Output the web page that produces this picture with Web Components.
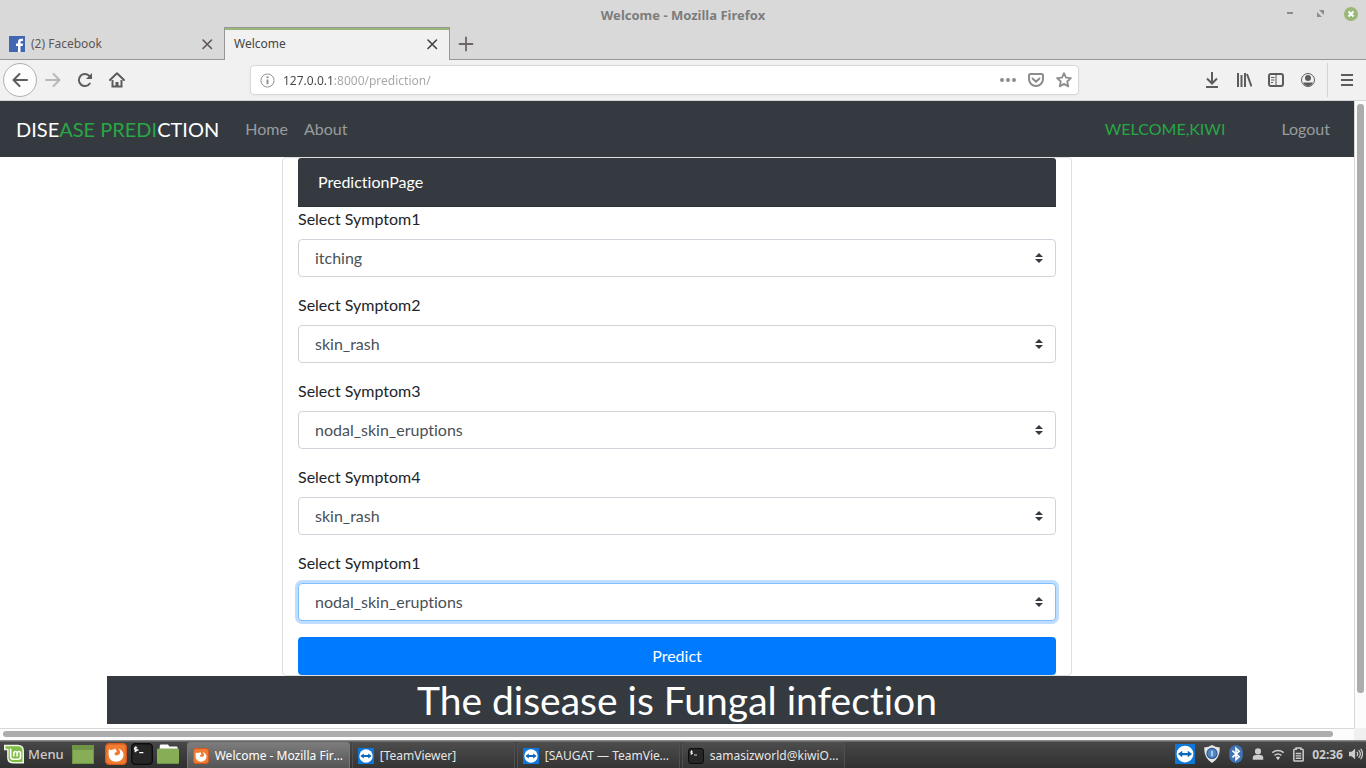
<!DOCTYPE html>
<html lang="en">
<head>
<meta charset="utf-8">
<title>Welcome - Mozilla Firefox</title>
<style>
html,body{margin:0;height:100%}
body{font-family:"Noto Sans",sans-serif;background:#fff}
</style>
</head>
<body>
<desktop-screen>
  <browser-window heading="Welcome - Mozilla Firefox">
    <browser-tab slot="tabs" label="(2) Facebook" icon="facebook"></browser-tab>
    <browser-tab slot="tabs" label="Welcome" active></browser-tab>
    <site-page>
      <site-nav></site-nav>
      <prediction-card>
        <symptom-select label="Select Symptom1" value="itching" name="symptom1"></symptom-select>
        <symptom-select label="Select Symptom2" value="skin_rash" name="symptom2"></symptom-select>
        <symptom-select label="Select Symptom3" value="nodal_skin_eruptions" name="symptom3"></symptom-select>
        <symptom-select label="Select Symptom4" value="skin_rash" name="symptom4"></symptom-select>
        <symptom-select label="Select Symptom1" value="nodal_skin_eruptions" name="symptom5" highlighted></symptom-select>
      </prediction-card>
      <result-banner>The disease is Fungal infection</result-banner>
    </site-page>
  </browser-window>
  <task-bar slot="panel">
    <task-item icon="firefox" active>Welcome - Mozilla Firefox</task-item>
    <task-item icon="teamviewer">[TeamViewer]</task-item>
    <task-item icon="teamviewer">[SAUGAT — TeamViewer]</task-item>
    <task-item icon="terminal">samasizworld@kiwiOS: ~</task-item>
  </task-bar>
</desktop-screen>

<script>
const svg = (size, body, box = 16) =>
  `<svg width="${size}" height="${size}" viewBox="0 0 ${box} ${box}" fill="none" stroke="currentColor" stroke-width="2" aria-hidden="true">${body}</svg>`;

const icons = {
  close: '<path d="M4 4l8.500 8.500M12.500 4L4 12.500" stroke-width="1.600" stroke-linecap="round"/>',
  plus: '<path d="M8 1.500v13M1.500 8h13" stroke-width="1.800" stroke-linecap="round"/>',
  back: '<path d="M15 8H2M7.500 2L1.500 8l6 6" stroke-linecap="round" stroke-linejoin="round"/>',
  forward: '<path d="M1 8h13M8.500 2l6 6-6 6" stroke-linecap="round" stroke-linejoin="round"/>',
  reload: '<path d="M12.800 11.500A6 6 0 1 1 12.500 4.200" stroke-linecap="round"/><path d="M15 1v6H9z" fill="currentColor" stroke="none"/>',
  home: '<path d="M1 8l7-6.700L15 8" stroke-linecap="round" stroke-linejoin="round"/><path d="M3.500 8v6.500h9V8"/><path d="M8 15v-5" stroke-width="3"/>',
  info: '<circle cx="8" cy="8" r="7" stroke-width="1"/><path d="M8 7v5" stroke-width="2"/><circle cx="8" cy="4.600" r="1.200" fill="currentColor" stroke="none"/>',
  dots: '<g fill="currentColor" stroke="none"><circle cx="2" cy="8" r="2"/><circle cx="8" cy="8" r="2"/><circle cx="14" cy="8" r="2"/></g>',
  pocket: '<path d="M2.500 2h11q1.500 0 1.500 1.500V7A7 7 0 0 1 1 7V3.500Q1 2 2.500 2z"/><path d="M4.500 6.500L8 9.700l3.500-3.200" stroke-linecap="round" stroke-linejoin="round"/>',
  star: '<path d="M8 1.200l2 4.500 4.900.5-3.700 3.300 1.100 4.900L8 11.900l-4.300 2.500 1.100-4.900L1.100 6.200l4.900-.5z" stroke-width="1.800" stroke-linejoin="round"/>',
  download: '<path d="M8 0v11M3 6.500l5 5 5-5M2 15h12"/>',
  library: '<path d="M2 1v14M5.500 3v12M9 1v14M11 2l4.500 12.500"/>',
  sidebar: '<rect x="1" y="2" width="14" height="12" rx="2"/><path d="M8 2v12M3 5.500h3.500M3 8h3.500M3 10.500h2" stroke-width="1"/>',
  account: '<circle cx="8" cy="8" r="6.500" stroke-width="1"/><circle cx="8" cy="6" r="3" fill="currentColor" stroke="none"/><path d="M3 10.500h10Q11.500 14 8 14T3 10.500z" fill="currentColor" stroke="none"/>',
  menu: '<path d="M2 3h12M2 8h12M2 13h12"/>',
  facebook: '<path fill="#4267b2" stroke="none" d="M0 0h16v16H0z"/><path fill="#fff" stroke="none" d="M9 16v-6H7V7.500h2V6q0-3.200 3.200-3.200H14v2.300h-1.200Q11.500 5.100 11.500 6.300v1.200H14l-.4 2.500h-2.100v6z"/>',
  firefox: '<rect x=".5" y=".5" width="15" height="15" rx="2.500" fill="#f07c33" stroke="#d6591d" stroke-width="1"/><path d="M3 4q.3 1 1 1.200Q5 4.600 6.500 4.800L7.500 3.700Q7.300 5 8.500 5.800q.3.900-1.400 1.200-.5 1.800 1.400 2 1.800-.2 2.500-1.500.2-1.800-1.200-3.500Q13.500 5.500 13.500 8.800q-.6 4.700-5.400 4.900Q3 13.400 2.600 8.400 2.500 5.800 3 4z" fill="#fff" stroke="none"/>',
  terminal: '<rect x=".5" y=".5" width="15" height="15" rx="2.500" fill="#262626" stroke="#0c0c0c" stroke-width="1"/><path d="M4.600 3.500Q2.500 2.800 2.500 4t2 1-2 1M3.500 2.300v4.400M6 7h3" stroke="#fff" stroke-width=".8"/>',
  teamviewer: '<path fill="#0e77d8" stroke="none" d="M0 0h16v16H0z"/><circle cx="8" cy="8" r="6.700" fill="#fff" stroke="none"/><path d="M2.300 8l3.500-2.600v1.700h4.400V5.400L13.700 8l-3.500 2.600V8.900H5.800v1.700z" fill="#0968bd" stroke="none"/>',
  folder: '<path d="M2 2q0-1 1-1h5l1 1.500h5q1 0 1 1V5H2z" fill="#fff" stroke="none"/><path d="M0 5q0-1 1-1h14q1 0 1 1v9.500q0 .5-.5.5H.5q-.5 0-.5-.5z" fill="#87ae57" stroke="none"/>',
  mint: '<path d="M0 .5h11q5 0 5 5V15.500H7q-4.500 0-4.500-4.500V5H0z" fill="#eef6e4" stroke="none"/><path d="M1.200 1.700H11q3.800 0 3.800 3.800v8.800H7.200Q3.700 14.300 3.700 11V3.800H1.200z" fill="#7fbd45" stroke="none"/><path d="M5.300 3.500V10q0 2.200 2.200 2.200h3.700q2 0 2-2V7.500q0-1.500-1.300-1.500t-1.400 1.500V10M10.500 7.500Q10.400 6 9.100 6T7.800 7.500V10" stroke="#fff" stroke-width="1.300"/>',
  shield: '<path d="M8 0q3 2 7 2.200Q15 12 8 16 1 12 1 2.200 5 2 8 0z" fill="#e4e4e4" stroke="none"/><circle cx="8" cy="7.500" r="4.500" fill="#4f86c3" stroke="#2b5a92" stroke-width="1"/><path d="M8 5v5" stroke="#dce8f8" stroke-width="1.200"/>',
  bluetooth: '<rect x="2" width="12" height="16" rx="6" fill="#3f73b5" stroke="none"/><path d="M4.800 5l6 5.500L8 13V3l2.800 2.500-6 5.500" stroke="#fff" stroke-width="1.400"/>',
  user: '<circle cx="8" cy="5" r="3.500" fill="currentColor" stroke="none"/><path d="M2 14.500v-2Q2 9 5.500 9h5Q14 9 14 12.500v2z" fill="currentColor" stroke="none"/>',
  wifi: '<path d="M1.500 6.500q6.500-5 13 0M4 9.500q4-3.200 8 0" stroke-width="1.700"/><path d="M8 15l-2.500-3.200q2.500-1.800 5 0z" fill="currentColor" stroke="none"/>',
  battery: '<path d="M5.500 2.500V1h5v1.500H12q1 0 1 1V14q0 1-1 1H4q-1 0-1-1V3.500q0-1 1-1z" stroke-width="1.600"/><path d="M5 7h6M5 9.500h6M5 12h6" stroke-width="1.500"/>',
  sound: '<path d="M0 5.500h3L7 2v12l-4-3.500H0z" fill="currentColor" stroke="none"/><path d="M9 5.500q2 2.500 0 5M11 3.500q4 4.500 0 9M13.300 2q4.500 6 0 12" stroke-width="1.400"/>'
};
const icon = (name, size = 16) => svg(size, icons[name]);

class Base extends HTMLElement {
  connectedCallback() {
    if (!this.shadowRoot) this.attachShadow({ mode: 'open' }).innerHTML =
      `<style>*{box-sizing:border-box}svg{display:block;flex:none}button{font:inherit;color:inherit;border:0;background:none;padding:0;margin:0}a{color:inherit;text-decoration:none}${this.css()}</style>${this.html()}`;
  }
}

customElements.define('desktop-screen', class extends Base {
  css() { return `:host{display:flex;flex-direction:column;height:100vh;min-height:400px;overflow:hidden}
    main{flex:1;min-height:0;display:flex}`; }
  html() { return `<main><slot></slot></main><slot name="panel"></slot>`; }
});

customElements.define('browser-window', class extends Base {
  css() { return `
    :host{flex:1;min-width:0;display:flex;flex-direction:column;color:#4a4a4a}
    .title{height:27px;background:#d9d9d9;display:grid;grid-template-columns:1fr auto 1fr;align-items:center;font-size:13px;font-weight:700;color:#7c7c7c}
    h1{font:inherit;margin:0;grid-column:2;line-height:20px;padding-top:3px}
    .controls{display:flex;justify-content:flex-end;align-items:center;gap:20px;color:#8c8c8c;padding-right:8px}
    .controls button:first-child{margin-right:3px}
    .strip{height:33px;background:#d9d9d9;display:flex;box-shadow:inset 0 -1px #979797}
    .new{width:32px;display:flex;align-items:center;justify-content:center;color:#6d6464}
    .bar{height:40px;background:#f1f1f1;display:flex;align-items:center;color:#5c5c5c;padding:0 11px 0 3px}
    .nav{display:flex;align-items:center;flex:247 1 0}
    .nav button{width:32px;height:32px;display:flex;align-items:center;justify-content:center}
    .nav .back{width:34px;height:34px;border:1px solid #b0b0b0;border-radius:50%;background:#fcfcfc}
    .nav .off{color:#b8b8b8}
    .url{flex:812 1 0;min-width:0;height:30px;background:#fff;border:1px solid #d9d9d9;border-radius:4px;box-shadow:0 1px 3px #0000000d;display:flex;align-items:center;padding:0 6px 0 9px;color:#8c8c8c;gap:8px}
    input{flex:1;min-width:0;border:0;outline:0;padding:0;font:12px "Noto Sans",sans-serif;height:20px;color:transparent;background:linear-gradient(90deg,#444 51px,#a5a5a5 51px);-webkit-background-clip:text;background-clip:text}
    .actions{display:flex;gap:12px}
    .tools{flex:276 1 0;display:flex;justify-content:flex-end;align-items:center;gap:16px}
    .sep{width:1px;height:34px;background:#d4d4d4;margin-right:-5px;margin-left:-5px}
    .view{flex:1;min-height:0;display:grid;grid-template:minmax(0,1fr) 12px/minmax(0,1fr) 12px;background:#fcfcfc;border-top:1px solid #d4d4d4}
    .page{overflow:hidden;background:#fff}
    .v{border-left:1px solid #d8d8d8;padding:3px 2px 35px}
    .h{border-top:1px solid #d8d8d8;padding:2px 21px 3px 3px}
    .v i,.h i{display:block;width:100%;height:100%;background:#adadad;border-radius:3px}
    .corner{background:#f0f0f0}`; }
  html() { return `
    <header class="title"><h1>${this.getAttribute('heading')}</h1><div class="controls">
      <button aria-label="Minimize">${svg(7, '<path d="M0 3h6"/>', 7)}</button>
      <button aria-label="Restore">${svg(7, '<path d="M2 0h5v5zM0 2l5 5H0z" fill="currentColor" stroke="none"/>', 7)}</button>
      <button aria-label="Close">${svg(14, '<circle cx="7" cy="7" r="7" fill="#99b877" stroke="none"/><path d="M4.500 4.500l5 5m0-5l-5 5" stroke="#fff"/>', 14)}</button></div></header>
    <div class="strip"><slot name="tabs"></slot><button class="new" aria-label="New tab">${icon('plus')}</button></div>
    <div class="bar"><div class="nav">
      <button class="back" aria-label="Back">${icon('back')}</button><button class="off" aria-label="Forward">${icon('forward')}</button>
      <button aria-label="Reload">${icon('reload')}</button><button aria-label="Home">${icon('home')}</button></div>
      <div class="url">${icon('info', 15)}<input aria-label="Address" value="127.0.0.1:8000/prediction/" spellcheck="false">
        <div class="actions"><button aria-label="Page actions">${icon('dots')}</button><button aria-label="Save to Pocket">${icon('pocket')}</button><button aria-label="Bookmark">${icon('star')}</button></div></div>
      <div class="tools"><button aria-label="Downloads">${icon('download')}</button><button aria-label="Library">${icon('library')}</button>
        <button aria-label="Sidebars">${icon('sidebar')}</button><button aria-label="Account">${icon('account')}</button><span class="sep"></span><button aria-label="Menu">${icon('menu')}</button></div>
    </div>
    <div class="view"><div class="page"><slot></slot></div><div class="v"><i></i></div><div class="h"><i></i></div><div class="corner"></div></div>`; }
});

customElements.define('browser-tab', class extends Base {
  css() { return `
    :host{display:flex;align-items:center;width:224px;padding:0 9px;font-size:12px;color:#5e5656;gap:6px;box-sizing:border-box}
    :host([active]){width:226px;background:#f1f1f1;border:1px solid #979797;border-bottom:0;box-shadow:inset 0 2px #99b877;color:#444}
    .label{flex:1;text-align:left;line-height:20px}`; }
  html() { const i = this.getAttribute('icon');
    return `${i ? icon(i) : ''}<button class="label">${this.getAttribute('label')}</button><button aria-label="Close tab">${icon('close')}</button>`; }
});

customElements.define('site-page', class extends Base {
  css() { return `:host{display:block;font:16px/24px Lato,sans-serif;font-variant-ligatures:none;color:#212529}`; }
  html() { return `<slot></slot>`; }
});

customElements.define('site-nav', class extends Base {
  css() { return `
    :host{display:block;background:#343a40}
    nav{display:flex;align-items:center;padding:8px 16px;color:#999c9f}
    .brand{font-size:20px;line-height:30px;padding:5px 0;margin-right:18px;color:#fff}
    .brand span,.user{color:#28a745}
    nav a{padding:8px}
    .user{margin-left:auto;margin-right:40px}`; }
  html() { return `<nav><a class="brand" href="#">DISE<span>ASE PREDI</span>CTION</a><a href="#">Home</a><a href="#">About</a><a href="#" class="user">WELCOME,KIWI</a><a href="#">Logout</a></nav>`; }
});

customElements.define('prediction-card', class extends Base {
  css() { return `
    :host{display:block;max-width:790px;margin:0 auto;box-sizing:border-box;border:1px solid #dfdfdf;border-radius:4px;padding:0 15px}
    h2{margin:0;font:inherit;font-variant-ligatures:none;background:#343a40;color:#fff;padding:12px 20px;border-bottom:1px solid #2d3238;border-radius:3px 3px 0 0}
    form{margin:0}
    .go{width:100%;height:38px;background:#007bff;color:#fff;border-radius:4px;display:block}`; }
  html() { return `<h2>PredictionPage</h2><form><slot></slot><button type="button" class="go">Predict</button></form>`; }
});

customElements.define('symptom-select', class extends Base {
  css() { return `
    :host{display:block;margin-bottom:16px}
    label{display:block;margin-bottom:8px}
    select{display:block;width:100%;height:38px;font:inherit;font-variant-ligatures:none;color:#495057;padding:6px 28px 6px 16px;border:1px solid #ced4da;border-radius:4px;appearance:none;outline:0;
      background:#fff url("data:image/svg+xml,%3csvg xmlns='http://www.w3.org/2000/svg' viewBox='0 0 4 5'%3e%3cpath fill='%23343a40' d='M2 0L0 2h4zm0 5L0 3h4z'/%3e%3c/svg%3e") no-repeat right 12px center/8px 10px}
    :host([highlighted]) select{border-color:#80bdff;box-shadow:0 0 0 3px #007bff40}`; }
  html() { const v = this.getAttribute('value'), n = this.getAttribute('name');
    return `<label for="${n}">${this.getAttribute('label')}</label><select id="${n}" name="${n}">${['itching', 'skin_rash', 'nodal_skin_eruptions'].map(o => `<option${o === v ? ' selected' : ''}>${o}</option>`).join('')}</select>`; }
});

customElements.define('result-banner', class extends Base {
  css() { return `
    :host{display:block;max-width:1140px;margin:0 auto;background:#343a40;color:#fff;text-align:center}
    h2{margin:0;font-size:39px;line-height:48px;font-weight:400}`; }
  html() { return `<h2><slot></slot></h2>`; }
});

customElements.define('task-bar', class extends Base {
  css() { return `
    :host{display:flex;align-items:center;height:28px;flex:none;background:linear-gradient(#8a8a8a 1px,#474747 2px,#303030);color:#ddd;font-size:13px;padding:0 3px 0 4px;box-sizing:border-box}
    .menu{display:flex;align-items:center;gap:4px;font-weight:500;color:#ccc;margin-right:8px}
    .desk{width:22px;height:19px;background:#87ae57;border:1px solid #6f9446;border-top:5px solid #6f9446;margin-right:11px}
    .quick{display:flex;gap:4px;margin-right:8px}
    .tasks{display:flex;flex:1;gap:2px;align-self:stretch;padding-top:2px}
    .tray{display:flex;align-items:center;gap:6px;color:#ccc}
    .tray .tv{margin-right:2px}
    time{font-size:12px;font-weight:700}`; }
  html() { return `
    <button class="menu">${icon('mint', 20)}Menu</button><button class="desk" aria-label="Show desktop"></button>
    <div class="quick"><button aria-label="Firefox">${icon('firefox', 22)}</button><button aria-label="Terminal">${icon('terminal', 22)}</button><button aria-label="Files">${icon('folder', 22)}</button></div>
    <div class="tasks"><slot></slot></div>
    <div class="tray"><span class="tv">${icon('teamviewer', 20)}</span>${icon('shield', 18)}${icon('bluetooth', 18)}${icon('user', 14)}${icon('wifi', 14)}${icon('battery', 15)}<time>02:36</time>${icon('sound', 14)}</div>`; }
});

customElements.define('task-item', class extends Base {
  css() { return `
    :host{display:block;width:163px;min-width:0}
    button{display:flex;align-items:center;width:100%;height:100%;padding:0 3px 0 5px;gap:6px;font-size:12px;color:#e6e6e6;border:1px solid #505050;border-bottom:0;border-radius:3px 3px 0 0;background:linear-gradient(#4c4c4c,#343434)}
    :host([active]) button{background:linear-gradient(#7c7c7c,#555);border-color:#777;color:#fff}
    span{overflow:hidden;text-overflow:ellipsis;white-space:nowrap}`; }
  html() { return `<button>${icon(this.getAttribute('icon'))}<span><slot></slot></span></button>`; }
});
</script>
</body>
</html>
